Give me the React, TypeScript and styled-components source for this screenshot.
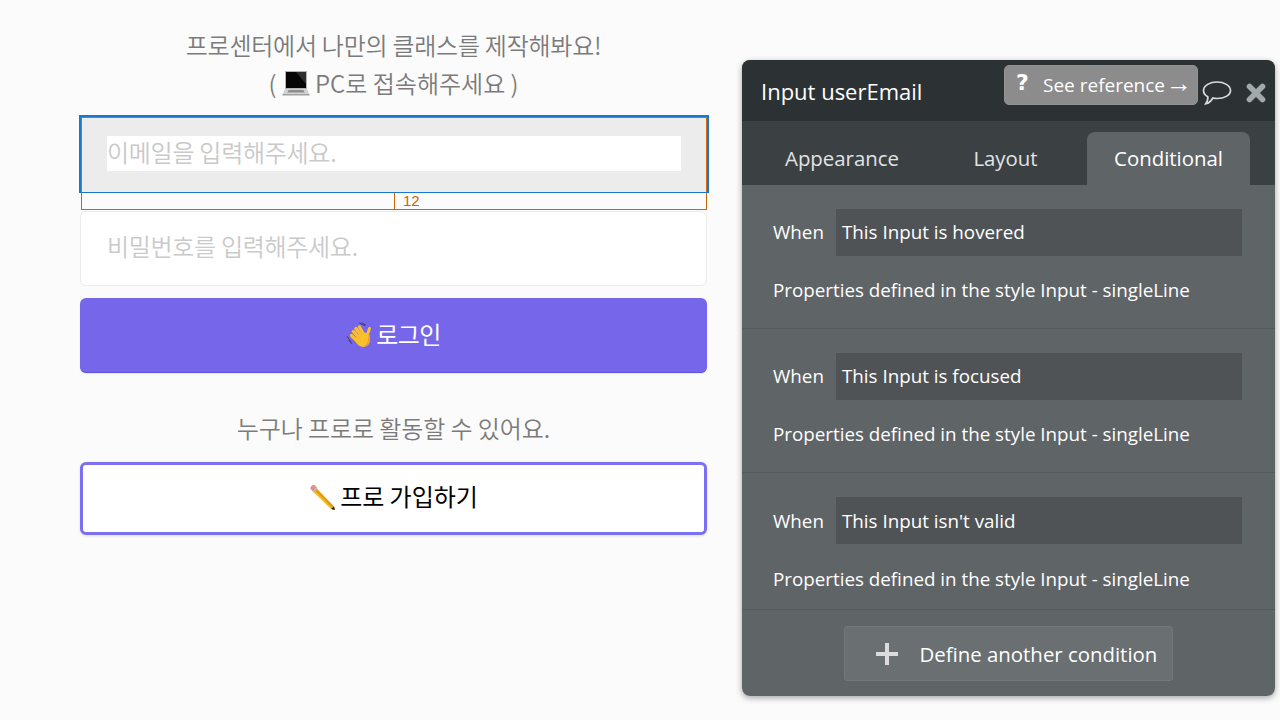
import React from "react";
import styled, { createGlobalStyle } from "styled-components";

const Global = createGlobalStyle`
  html, body { margin: 0; padding: 0; width: 1280px; height: 720px; overflow: hidden; background: #fbfbfb; }
  * { box-sizing: border-box; }
`;
const Page = styled.div`
  width: 1280px; height: 720px; display: flex; align-items: flex-start; background: #fbfbfb;
  font-family: "Noto Sans CJK KR", "Noto Sans", sans-serif;
`;
const Left = styled.div`
  width: 627px; margin-left: 80px; padding-top: 26px; display: flex; flex-direction: column;
`;
const Heading = styled.div`
  color: #7b7b7b; font-size: 24px; line-height: 38px; letter-spacing: -0.25px; font-weight: 350;
  height: 76px; margin-bottom: 15px;
  display: flex; flex-direction: column; align-items: center;
`;
const HeadLine = styled.div`display: flex; align-items: center; height: 38px; white-space: pre;`;
const HeadLineWide = styled(HeadLine)`letter-spacing: 0;`;
const EmailBox = styled.div`
  position: relative; height: 75px; background: #ececec; padding: 19px 26px 19px 27px;
`;
const SelectBlue = styled.div`
  position: absolute; left: -1px; top: -2px; right: -2px; bottom: -1px;
  border: 2px solid #1a78cc; border-bottom-width: 1px;
`;
const SelectOrange = styled.div`
  position: absolute; left: 1px; top: 0; right: 0; bottom: 0; border: 1px solid #d06a08; border-bottom: none;
`;
const InnerField = styled.div`
  height: 35px; background: #fff; display: flex; align-items: center; color: #c9c9c9; padding-bottom: 4px;
  font-size: 24px; letter-spacing: -0.27px; font-weight: 350;
`;
const Gap = styled.div`
  height: 18px; margin-left: 1px; margin-bottom: 1px; border: 1px solid #c8640a; border-top: none; display: flex;
`;
const GapHalf = styled.div`
  width: 313px; border-right: 1px solid #c8640a;
`;
const GapLabel = styled.div`
  margin-left: 8px; font-family: "Liberation Sans", sans-serif; font-size: 15px; line-height: 17px; color: #c8640a;
`;
const PasswordBox = styled.div`
  height: 75px; background: #fff; border: 1px solid #ebebeb; border-radius: 6px; display: flex; align-items: center;
  padding-left: 26px; padding-bottom: 7px; color: #cacaca; font-size: 24px; letter-spacing: -0.3px; font-weight: 350;
  margin-bottom: 12px;
`;
const LoginButton = styled.div`
  height: 75px; background: #7566ea; border-bottom: 1px solid #5f50e0; border-radius: 6px; display: flex; align-items: center; justify-content: center;
  color: #fff; font-size: 24px; letter-spacing: -0.55px; gap: 4px; box-shadow: 0 1px 2px rgba(0,0,0,.08);
`;
const ButtonLabel = styled.span`margin-bottom: 4px;`;
const SubText = styled.div`
  margin-top: 35px; height: 40px; text-align: center; color: #7b7b7b; font-size: 24px; line-height: 40px; letter-spacing: -0.08px; font-weight: 350;
`;
const SignupButton = styled.div`
  margin-top: 14px; height: 73px; background: #fff; border: 3px solid #7d70f0; border-radius: 6px; display: flex; align-items: center; justify-content: center;
  padding-bottom: 2px; color: #000; font-size: 24px; letter-spacing: -0.05px; gap: 4px; box-shadow: 0 1px 3px rgba(0,0,0,.12);
`;
const PanelShadow = styled.div`
  margin-left: 35px; margin-top: 60px; width: 533px; height: 636px; border-radius: 8px; box-shadow: 0 2px 6px rgba(0,0,0,.35);
`;
const Panel = styled.div`
  position: relative; width: 533px; height: 636px; border-radius: 8px; overflow: hidden;
  background: #5f6467; display: flex; flex-direction: column; font-family: "Open Sans", sans-serif; color: #fff;
`;
const Header = styled.div`
  height: 61px; background: #2c3134; display: flex; align-items: center; padding-left: 19px; font-size: 22px; position: relative;
  flex: none;
`;
const HeaderIcons = styled.div`
  margin-left: auto; display: flex; align-items: center; gap: 14px; padding: 5px 9px 0 0;
`;
const Reference = styled.div`
  position: absolute; left: 262px; top: 5px; width: 194px; height: 40px; border-radius: 5px; background: #8c8c8c; border: 1px solid #939393;
  display: flex; align-items: center; color: #fff; font-size: 19px; padding-left: 11px; white-space: pre;
`;
const Question = styled.span`font-weight: 800; font-size: 22px; width: 27px; margin-top: -5px; font-family: "DejaVu Sans", sans-serif;`;
const Arrow = styled.span`font-family: "Liberation Sans", sans-serif; font-size: 26px; line-height: 20px; margin: -4px 0 0 1px;`;
const Tabs = styled.div`
  height: 64px; background: #3b4043; display: flex; align-items: flex-end; padding-left: 15px; flex: none;
`;
const Tab = styled.div<{ $active?: boolean; $w: number; $pr?: number }>`
  width: ${p => p.$w}px; height: 53px; border-radius: 8px 8px 0 0; display: flex; align-items: center; justify-content: center;
  padding-right: ${p => p.$pr ?? 0}px; padding-bottom: 2px;
  font-size: 20.4px; color: ${p => (p.$active ? "#fff" : "#e2e3e3")}; background: ${p => (p.$active ? "#5f6467" : "transparent")};
`;
const Rule = styled.div<{ $h: number }>`
  height: ${p => p.$h}px; border-bottom: 1px solid #555a5d; padding: 24px 33px 0 31px; flex: none;
`;
const WhenRow = styled.div`display: flex; align-items: center; height: 47px;`;
const WhenLabel = styled.div<{ $nudge: number }>`width: 63px; font-size: 18.8px; margin-bottom: ${p => 2 - p.$nudge * 2}px;`;
const WhenField = styled.div<{ $nudge: number }>`
  flex: 1; height: 47px; background: #4f5356; display: flex; align-items: center; padding: 0 0 ${p => 2 - p.$nudge * 2}px 6px; font-size: 18.8px;
`;
const Props = styled.div<{ $nudge: number }>`margin-top: ${p => 21.5 + p.$nudge}px; font-size: 18.8px; line-height: 25px; white-space: nowrap;`;
const Footer = styled.div`flex: 1; display: flex; justify-content: center; padding-top: 16px;`;
const AddButton = styled.div`
  width: 329px; height: 55px; margin-left: -1px; background: #6a6f72; border: 1px solid #72777a; border-radius: 3px; display: flex; align-items: center; padding-left: 30px; gap: 21px; font-size: 20.4px;
`;

const Laptop = () => (
  <svg width="28" height="26" viewBox="0 0 28 26">
    <path d="M3 1 H25 V19 H3 Z" fill="#b5b5b5" />
    <path d="M4 2 H24 V18 H4 Z" fill="#060606" />
    <path d="M14 2 H24 V14 Z" fill="#2e2e2e" />
    <path d="M3 19 H25 L27.5 24.5 H.5 Z" fill="#d2d2d2" />
    <path d="M6.5 20 H21.5 L22.5 22.5 H5.5 Z" fill="#8d8d8d" />
    <rect x=".5" y="24" width="27" height="1.5" fill="#a2a2a2" />
  </svg>
);
const Wave = () => (
  <svg width="26" height="26" viewBox="0 0 26 26">
    <g stroke="#fbbf2b" strokeLinecap="round" fill="none">
      <path d="M7.5 9.5 L13 16" strokeWidth="3.4" />
      <path d="M10 6.5 L15.5 14" strokeWidth="3.4" />
      <path d="M13.5 5 L18 13" strokeWidth="3.2" />
      <path d="M5.5 13.5 L11 19" strokeWidth="3.2" />
      <path d="M23.5 6.5 L21 14" strokeWidth="3" />
    </g>
    <path d="M9 17 C10 23 15 26 19.5 24.5 C24 23 25 18 23.5 13 L19 10.5 L13 13 Z" fill="#fbbf2b" />
    <path d="M19.5 24.5 C23.5 23 25 18 23.5 13 L22 13 C23 18 21.5 22 18 24 Z" fill="#f2a01e" />
    <g stroke="#3e3d78" strokeWidth="1" fill="none" strokeLinecap="round">
      <path d="M1.2 14.5 L5 20" /><path d="M3 18.5 L5.5 21.5" />
      <path d="M13.5 1 L18.5 3.5" /><path d="M16 1 L19.5 3" />
    </g>
  </svg>
);
const Pencil = () => (
  <svg width="27" height="27" viewBox="0 0 27 27">
    <path d="M6.5 3.5 L25 22.5 L26 26 L22 25 L3.5 7 Z" fill="#f5b91e" />
    <path d="M8 5 L25 22.5 L23.5 24 L6 6.5 Z" fill="#e39a12" />
    <path d="M1.5 5 C1 2.5 3 .5 5.5 1 L8 3.5 L4 7.5 Z" fill="#e88b8b" />
    <path d="M3.5 7 L7 3 L8.5 4.5 L5 8.5 Z" fill="#b9b9b9" />
    <path d="M22 25 L25 22.5 L26 26 Z" fill="#222" />
  </svg>
);
const Bubble = () => (
  <svg width="30" height="26" viewBox="0 0 30 26" fill="none">
    <path d="M15 2 C22 2 28.5 5.5 28.5 10.5 C28.5 15.5 22 18.5 15 18.5 C13.5 18.5 12 18.3 10.8 18 C9.5 20.5 7 23 3.8 23.8 C5.5 21 6.2 19 5.8 16.8 C3.2 15.3 1.5 13 1.5 10.5 C1.5 5.5 8 2 15 2 Z" stroke="#d9dbdb" strokeWidth="1.7" />
  </svg>
);
const Close = () => (
  <svg width="20" height="20" viewBox="0 0 20 20">
    <path d="M3.5 3.5 L16.5 16.5 M16.5 3.5 L3.5 16.5" stroke="#a2a9aa" strokeWidth="5.6" strokeLinecap="round" />
  </svg>
);
const Plus = () => (
  <svg width="24" height="24" viewBox="0 0 24 24">
    <path d="M12 1 V23 M1 12 H23" stroke="#dcdcdc" strokeWidth="4" />
  </svg>
);

const conditions = [
  { text: "This Input is hovered", h: 144, nudge: 0 },
  { text: "This Input is focused", h: 144, nudge: 0 },
  { text: "This Input isn't valid", h: 137, nudge: 1 },
];

export default function App() {
  return (
    <Page>
      <Global />
      <Left>
        <Heading>
          <HeadLine>프로센터에서 나만의 클래스를 제작해봐요!</HeadLine>
          <HeadLineWide>( <Laptop /> PC로 접속해주세요 )</HeadLineWide>
        </Heading>
        <EmailBox>
          <InnerField>이메일을 입력해주세요.</InnerField>
          <SelectBlue />
          <SelectOrange />
        </EmailBox>
        <Gap>
          <GapHalf />
          <GapLabel>12</GapLabel>
        </Gap>
        <PasswordBox>비밀번호를 입력해주세요.</PasswordBox>
        <LoginButton><Wave /><ButtonLabel>로그인</ButtonLabel></LoginButton>
        <SubText>누구나 프로로 활동할 수 있어요.</SubText>
        <SignupButton><Pencil /><ButtonLabel>프로 가입하기</ButtonLabel></SignupButton>
      </Left>
      <PanelShadow>
        <Panel>
          <Header>
            Input userEmail
            <Reference><Question>?</Question>See reference<Arrow>→</Arrow></Reference>
            <HeaderIcons><Bubble /><Close /></HeaderIcons>
          </Header>
          <Tabs>
            <Tab $w={170}>Appearance</Tab>
            <Tab $w={160} $pr={3}>Layout</Tab>
            <Tab $w={163} $active>Conditional</Tab>
          </Tabs>
          {conditions.map(c => (
            <Rule key={c.text} $h={c.h}>
              <WhenRow>
                <WhenLabel $nudge={c.nudge}>When</WhenLabel>
                <WhenField $nudge={c.nudge}>{c.text}</WhenField>
              </WhenRow>
              <Props $nudge={c.nudge}>Properties defined in the style Input - singleLine</Props>
            </Rule>
          ))}
          <Footer>
            <AddButton><Plus />Define another condition</AddButton>
          </Footer>
        </Panel>
      </PanelShadow>
    </Page>
  );
}
